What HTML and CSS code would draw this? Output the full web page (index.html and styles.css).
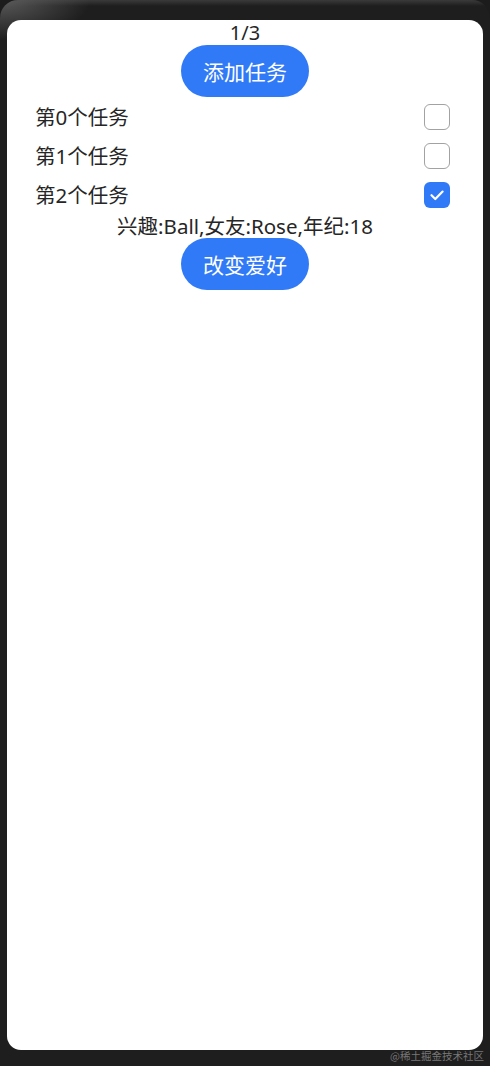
FILE: index.html
```html
<!DOCTYPE html>
<html lang="zh">
<head>
<meta charset="utf-8">
<link rel="stylesheet" href="styles.css">
</head>
<body>
<div class="device">
  <div class="screen">
    <div class="counter">1/3</div>
    <button class="btn">添加任务</button>
    <div class="list">
      <div class="row"><span class="label">第0个任务</span><span class="check"></span></div>
      <div class="row"><span class="label">第1个任务</span><span class="check"></span></div>
      <div class="row"><span class="label">第2个任务</span><span class="check on"><svg viewBox="0 0 26 26" width="26" height="26"><path d="M7.5 13.2 L11.3 17 L18.6 9.6" fill="none" stroke="#fff" stroke-width="2.2" stroke-linecap="round" stroke-linejoin="round"/></svg></span></div>
    </div>
    <div class="info">兴趣:Ball,女友:Rose,年纪:18</div>
    <button class="btn">改变爱好</button>
  </div>
  <div class="watermark">@稀土掘金技术社区</div>
</div>
</body>
</html>
```
FILE: styles.css
```css
html, body {
  margin: 0;
  padding: 0;
}
body {
  background: #1c1c1c;
  font-family: "Noto Sans", "Noto Sans CJK SC", sans-serif;
}
.device {
  position: relative;
  width: 490px;
  height: 1066px;
  box-sizing: border-box;
  padding: 20px 7px 16px 7px;
  background:
    radial-gradient(ellipse 90px 40px at 0 0, #5a5a5a 0%, rgba(90,90,90,0) 100%),
    linear-gradient(to bottom, #3a3a3a 0px, #1e1e1e 6px, #1e1e1e 100%);
  border-radius: 18px 18px 0 0;
}
.screen {
  height: 1030px;
  background: #fff;
  border-radius: 14px;
  display: flex;
  flex-direction: column;
  align-items: center;
  color: #262626;
}
.counter {
  font-size: 20px;
  line-height: 25px;
}
.btn {
  height: 52px;
  padding: 0 22px;
  border: none;
  border-radius: 26px;
  background: #317af7;
  color: #fff;
  font-family: "Noto Sans CJK SC", sans-serif;
  font-size: 21px;
  line-height: 52px;
}
.list {
  align-self: stretch;
  display: flex;
  flex-direction: column;
}
.row {
  height: 39px;
  display: flex;
  align-items: center;
  justify-content: space-between;
  padding: 0 33px 0 28px;
}
.label {
  font-size: 20.5px;
  line-height: 26px;
}
.check {
  width: 26px;
  height: 26px;
  box-sizing: border-box;
  border: 1.5px solid #a2a2a2;
  border-radius: 6px;
  display: flex;
}
.check.on {
  border: none;
  background: #317af7;
}
.info {
  font-size: 20.5px;
  line-height: 24px;
}
.watermark {
  position: absolute;
  right: 6px;
  bottom: 3px;
  font-size: 10.5px;
  color: #777;
  font-family: "Noto Sans CJK SC", sans-serif;
}
```
